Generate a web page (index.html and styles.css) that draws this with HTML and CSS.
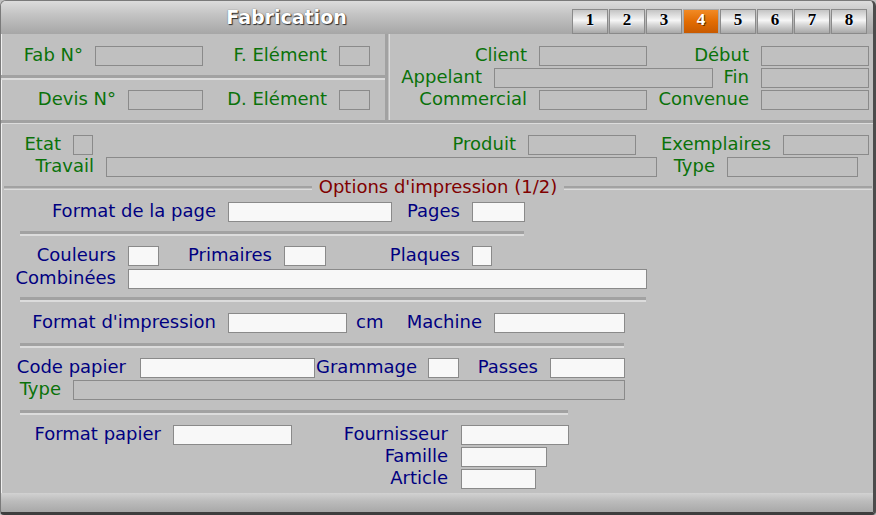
FILE: index.html
```html
<!DOCTYPE html>
<html lang="fr">
<head>
<meta charset="utf-8">
<title>Fabrication</title>
<link rel="stylesheet" href="styles.css">
</head>
<body>
<div class="win">
  <div class="titlebar">
    <div class="title">Fabrication</div>
    <div class="tabs">
      <span class="tab">1</span><span class="tab">2</span><span class="tab">3</span><span class="tab on">4</span><span class="tab">5</span><span class="tab">6</span><span class="tab">7</span><span class="tab">8</span>
    </div>
  </div>

  <div class="top">
    <div class="tl">
      <div class="cell c1">
        <span class="l g w94">Fab N°</span><span class="f ro w108"></span>
        <span class="l g w136">F. Elément</span><span class="f ro w31"></span>
      </div>
      <div class="hgr"></div>
      <div class="cell c2">
        <span class="l g w127">Devis N°</span><span class="f ro w75"></span>
        <span class="l g w136">D. Elément</span><span class="f ro w31"></span>
      </div>
    </div>
    <div class="vgr"></div>
    <div class="tr">
      <div class="row">
        <span class="l g w149">Client</span><span class="f ro w108"></span>
        <span class="l g w114">Début</span><span class="f ro w108"></span>
      </div>
      <div class="row">
        <span class="l g w104">Appelant</span><span class="f ro w219"></span>
        <span class="l g w48">Fin</span><span class="f ro w108"></span>
      </div>
      <div class="row">
        <span class="l g w149">Commercial</span><span class="f ro w108"></span>
        <span class="l g w114">Convenue</span><span class="f ro w108"></span>
      </div>
    </div>
  </div>
  <div class="fgr"></div>

  <div class="mid">
    <div class="row">
      <span class="l g w72">Etat</span><span class="f ro w20"></span>
      <span class="l g w435">Produit</span><span class="f ro w108"></span>
      <span class="l g w147">Exemplaires</span><span class="f ro w86"></span>
    </div>
    <div class="row">
      <span class="l g w105">Travail</span><span class="f ro w551"></span>
      <span class="l g w70">Type</span><span class="f ro w131"></span>
    </div>
  </div>

  <div class="hdr">
    <span class="hl"></span>
    <span class="htxt">Options d'impression (1/2)</span>
    <span class="hl"></span>
  </div>

  <div class="low">
    <div class="row">
      <span class="l b w227">Format de la page</span><span class="f wh w164"></span>
      <span class="l b w80">Pages</span><span class="f wh w53"></span>
    </div>
    <div class="sep s1 w504"></div>
    <div class="row m10">
      <span class="l b w127">Couleurs</span><span class="f wh w31"></span>
      <span class="l b w125">Primaires</span><span class="f wh w42"></span>
      <span class="l b w146">Plaques</span><span class="f wh w20"></span>
    </div>
    <div class="row m3">
      <span class="l b w127">Combinées</span><span class="f wh w519"></span>
    </div>
    <div class="sep s2 w626"></div>
    <div class="row m11">
      <span class="l b w227">Format d'impression</span><span class="f wh w119"></span>
      <span class="l b unit w47">cm</span>
      <span class="l b w100">Machine</span><span class="f wh w131"></span>
    </div>
    <div class="sep s3 w604"></div>
    <div class="row m10">
      <span class="l b w139 p14">Code papier</span><span class="f wh w175"></span>
      <span class="l b w113 p11">Grammage</span><span class="f wh w31"></span>
      <span class="l b w91">Passes</span><span class="f wh w75"></span>
    </div>
    <div class="row m2">
      <span class="l g w72">Type</span><span class="f ro w552"></span>
    </div>
    <div class="sep s4 w548"></div>
    <div class="paper">
      <div class="row">
        <span class="l b w172">Format papier</span><span class="f wh w119"></span>
      </div>
      <div class="stack">
        <div class="row">
          <span class="l b w169 p13">Fournisseur</span><span class="f wh w108"></span>
        </div>
        <div class="row">
          <span class="l b w169 p13">Famille</span><span class="f wh w86"></span>
        </div>
        <div class="row">
          <span class="l b w169 p13">Article</span><span class="f wh w75"></span>
        </div>
      </div>
    </div>
  </div>

  <div class="status"></div>
</div>
</body>
</html>
```

FILE: styles.css
```css
html, body {
  margin: 0;
  padding: 0;
  background: #c0c0c0;
}
body {
  width: 876px;
  height: 515px;
  overflow: hidden;
  font-family: "DejaVu Sans", Verdana, sans-serif;
  font-size: 18px;
}
.win {
  box-sizing: border-box;
  width: 876px;
  height: 515px;
  background: #c0c0c0;
  border: 1px solid #7a7a7a;
  border-right: 3px solid #4c4c4c;
  border-bottom: 3px solid #3e3e3e;
  border-radius: 6px 6px 4px 4px;
  box-shadow: inset 1px 0 0 #f0f0f0;
  display: flex;
  flex-direction: column;
  overflow: hidden;
}

/* title bar */
.titlebar {
  flex: none;
  height: 33px;
  display: flex;
  background: linear-gradient(#dcdcdc, #c4c4c4 40%, #a6a6a6);
}
.title {
  width: 571px;
  text-align: center;
  font-weight: bold;
  font-size: 19px;
  line-height: 33px;
  color: #ffffff;
  text-shadow: 1px 1px 1px #2a2a2a, 0 0 1px #505050;
}
.tabs {
  display: flex;
  gap: 1px;
  padding-top: 8px;
}
.tab {
  box-sizing: border-box;
  width: 36px;
  height: 25px;
  border: 1px solid #8a8a8a;
  background: linear-gradient(#c4c4c4, #f6f6f6 45%, #d6d6d6 65%, #a8a8a8);
  font-family: "Liberation Serif", "Times New Roman", serif;
  font-weight: bold;
  font-size: 17px;
  line-height: 19px;
  text-align: center;
  color: #000;
  text-shadow: 0 0 2px #ffffff, 1px 1px 0 #d8e8ff;
}
.tab.on {
  background: linear-gradient(#f28a24, #e26c02 50%, #c85a00);
  border-color: #a8a8a8;
  color: #ffffff;
  text-shadow: 1px 1px 0 #6a3400;
}

/* generic rows & fields */
.row {
  display: flex;
  align-items: flex-start;
  height: 20px;
  flex: none;
}
.l {
  flex: none;
  box-sizing: border-box;
  padding-right: 12px;
  text-align: right;
  white-space: nowrap;
  line-height: 17px;
}
.l.unit {
  text-align: left;
  padding-right: 0;
  padding-left: 9px;
}
.p11 { padding-right: 11px; }
.p13 { padding-right: 13px; }
.p14 { padding-right: 14px; }
.g { color: #0a720a; }
.b { color: #000080; }
.f {
  flex: none;
  box-sizing: border-box;
  height: 20px;
  border: 1px solid #8a8a8a;
}
.ro { background: transparent; }
.wh { background: #f8f8f8; }

/* top block */
.top {
  flex: none;
  height: 86px;
  display: flex;
}
.tl {
  width: 384px;
  display: flex;
  flex-direction: column;
}
.cell {
  display: flex;
  align-items: flex-start;
  box-sizing: border-box;
}
.c1 { height: 41px; padding-top: 12px; }
.c2 { height: 40px; padding-top: 10px; }
.hgr {
  height: 0;
  border-top: 3px solid #a2a2a2;
  border-bottom: 2px solid #dcdcdc;
}
.vgr {
  width: 1px;
  border-left: 3px solid #a2a2a2;
  border-right: 1px solid #dcdcdc;
}
.tr {
  flex: 1;
  padding-top: 12px;
  display: flex;
  flex-direction: column;
  gap: 2px;
}
.fgr {
  flex: none;
  height: 0;
  border-top: 3px solid #a2a2a2;
  border-bottom: 1px solid #dcdcdc;
}

/* second block */
.mid {
  flex: none;
  padding-top: 11px;
  display: flex;
  flex-direction: column;
  gap: 2px;
}
.hdr {
  flex: none;
  height: 18px;
  display: flex;
  align-items: center;
  gap: 7px;
  padding: 0 1px 0 3px;
}
.hl {
  flex: 1;
  height: 1px;
  margin-top: 3px;
  border-top: 2px solid #a2a2a2;
  border-bottom: 1px solid #dcdcdc;
}
.htxt {
  color: #800000;
  white-space: nowrap;
  line-height: 17px;
}

/* lower block */
.low {
  flex: none;
  padding-top: 7px;
  display: flex;
  flex-direction: column;
}
.sep {
  flex: none;
  height: 0;
  margin-left: 19px;
  border-top: 3px solid #a2a2a2;
  border-bottom: 2px solid #dcdcdc;
}
.s1 { margin-top: 9px; }
.s2 { margin-top: 8px; }
.s3 { margin-top: 10px; }
.s4 { margin-top: 10px; }
.m2 { margin-top: 2px; }
.m3 { margin-top: 3px; }
.m10 { margin-top: 10px; }
.m11 { margin-top: 11px; }
.paper {
  margin-top: 10px;
  display: flex;
  align-items: flex-start;
}
.stack {
  display: flex;
  flex-direction: column;
  gap: 2px;
}

.status {
  flex: none;
  margin-top: auto;
  height: 19px;
  background: linear-gradient(#d2d2d2, #bdbdbd 40%, #a8a8a8);
}

/* widths */
.w20 { width: 20px; }
.w31 { width: 31px; }
.w42 { width: 42px; }
.w47 { width: 47px; }
.w48 { width: 48px; }
.w53 { width: 53px; }
.w70 { width: 70px; }
.w72 { width: 72px; }
.w75 { width: 75px; }
.w80 { width: 80px; }
.w86 { width: 86px; }
.w91 { width: 91px; }
.w94 { width: 94px; }
.w100 { width: 100px; }
.w104 { width: 104px; }
.w105 { width: 105px; }
.w108 { width: 108px; }
.w113 { width: 113px; }
.w114 { width: 114px; }
.w119 { width: 119px; }
.w125 { width: 125px; }
.w127 { width: 127px; }
.w131 { width: 131px; }
.w136 { width: 136px; }
.w139 { width: 139px; }
.w146 { width: 146px; }
.w147 { width: 147px; }
.w149 { width: 149px; }
.w164 { width: 164px; }
.w169 { width: 169px; }
.w172 { width: 172px; }
.w175 { width: 175px; }
.w219 { width: 219px; }
.w227 { width: 227px; }
.w435 { width: 435px; }
.w504 { width: 504px; }
.w519 { width: 519px; }
.w548 { width: 548px; }
.w551 { width: 551px; }
.w552 { width: 552px; }
.w604 { width: 604px; }
.w626 { width: 626px; }
```
